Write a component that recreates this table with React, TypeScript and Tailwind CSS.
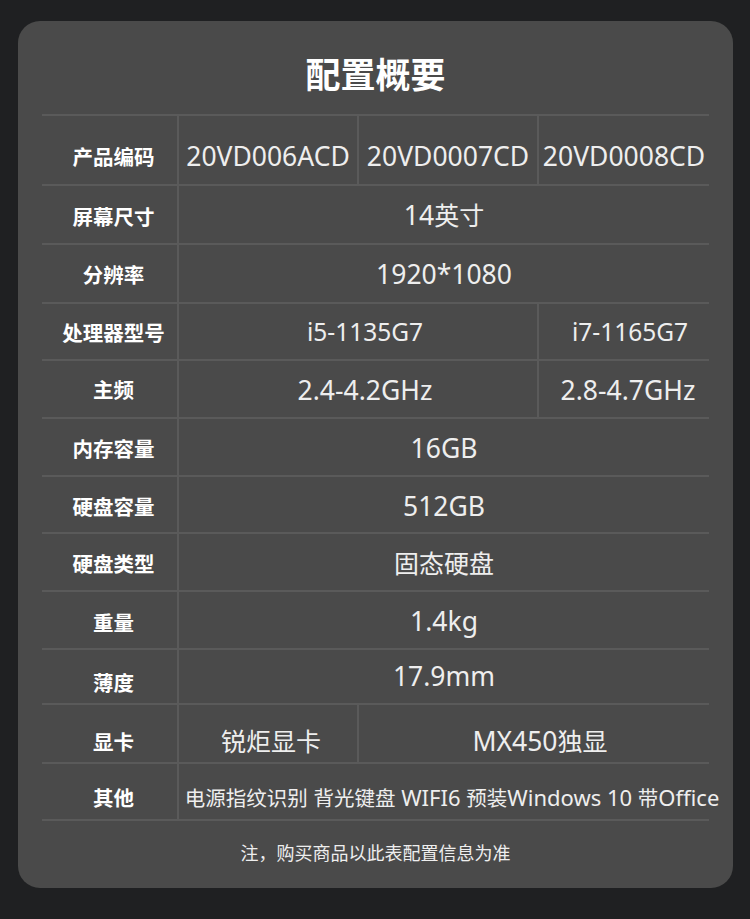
import React from "react";

type Cell = { text: string; span: number; cls?: string };
type Row = { label: string; h: string; lp: string; vp: string; lat?: string; cells: Cell[] };

const rows: Row[] = [
  {
    label: "产品编码",
    h: "h-[70px]",
    lp: "pt-[12px]",
    vp: "pt-[12px]",
    cells: [
      { text: "20VD006ACD", span: 1 },
      { text: "20VD0007CD", span: 1 },
      { text: "20VD0008CD", span: 1 },
    ],
  },
  { label: "屏幕尺寸", h: "h-[59px]", lp: "pt-[3px]", vp: "pt-[2px]", cells: [{ text: "14英寸", span: 3 }] },
  { label: "分辨率", h: "h-[59px]", lp: "pt-[1px]", vp: "pt-[2px]", cells: [{ text: "1920*1080", span: 3 }] },
  {
    label: "处理器型号",
    h: "h-[57px]",
    lp: "pt-[1px]",
    vp: "pt-[2px]",
    lat: "text-[24.5px]",
    cells: [
      { text: "i5-1135G7", span: 2, cls: "pl-[14px]" },
      { text: "i7-1165G7", span: 1, cls: "pl-[12px]" },
    ],
  },
  {
    label: "主频",
    h: "h-[58px]",
    lp: "pt-[1px]",
    vp: "pt-[2px]",
    cells: [
      { text: "2.4-4.2GHz", span: 2, cls: "pl-[14px]" },
      { text: "2.8-4.7GHz", span: 1, cls: "pl-[8px]" },
    ],
  },
  { label: "内存容量", h: "h-[58px]", lp: "pt-[2px]", vp: "pt-[2px]", cells: [{ text: "16GB", span: 3 }] },
  { label: "硬盘容量", h: "h-[57px]", lp: "pt-[4px]", vp: "pt-[3px]", cells: [{ text: "512GB", span: 3 }] },
  { label: "硬盘类型", h: "h-[58px]", lp: "pt-[2px]", vp: "pt-[2px]", cells: [{ text: "固态硬盘", span: 3 }] },
  { label: "重量", h: "h-[58px]", lp: "pt-[4px]", vp: "pt-[3px]", cells: [{ text: "1.4kg", span: 3 }] },
  { label: "薄度", h: "h-[55px]", lp: "pt-[12px]", vp: "pt-[0px]", cells: [{ text: "17.9mm", span: 3 }] },
  {
    label: "显卡",
    h: "h-[59px]",
    lp: "pt-[16px]",
    vp: "pt-[16px]",
    cells: [
      { text: "锐炬显卡", span: 1, cls: "pl-[6px]" },
      { text: "MX450独显", span: 2, cls: "pl-[12px]" },
    ],
  },
  {
    label: "其他",
    h: "h-[57px]",
    lp: "pt-[12px]",
    vp: "pt-[12px]",
    cells: [{ text: "电源指纹识别 背光键盘 WIFI6 预装Windows 10 带Office", span: 3, cls: "pl-[16px]" }],
  },
];

const spanClass: Record<number, string> = {
  1: "col-span-1",
  2: "col-span-2",
  3: "col-span-3",
};

function Mixed({ text, small, lat }: { text: string; small: boolean; lat?: string }) {
  const parts = text.split(/([\u4e00-\u9fff]+)/).filter((p) => p.length > 0);
  return (
    <span className="whitespace-pre">
      {parts.map((p, i) =>
        /[\u4e00-\u9fff]/.test(p) ? (
          <span key={i} className={small ? "text-[20.5px]" : "text-[25px]"}>
            {p}
          </span>
        ) : (
          <span key={i} className={small ? "text-[22px]" : lat ?? "text-[26.5px]"}>
            {p}
          </span>
        )
      )}
    </span>
  );
}

export default function App() {
  return (
    <div
      className="w-[750px] h-[919px] bg-[#1f2022] pt-[21px] pl-[18px]"
      style={{ fontFamily: '"Noto Sans", "Noto Sans CJK SC", sans-serif' }}
    >
      <div className="w-[715px] h-[867px] rounded-[22px] bg-[#4a4a4a] flex flex-col">
        <div className="h-[93px] flex items-center justify-center pt-[9px]">
          <h1
            className="text-[35px] font-bold text-white leading-none"
            style={{ fontFamily: '"Noto Sans CJK SC", sans-serif' }}
          >
            配置概要
          </h1>
        </div>
        <div className="ml-[24px] w-[667px] border-b-2 border-[#5a5a5a]">
          {rows.map((r) => {
            const small = r.label === "其他";
            return (
              <div
                key={r.label}
                className={`grid grid-cols-[135px_180px_180px_172px] border-t-2 border-[#5a5a5a] ${r.h}`}
              >
                <div
                  className={`flex items-center justify-center pl-[8px] text-[20.5px] font-bold text-white leading-none ${r.lp}`}
                  style={{ fontFamily: '"Noto Sans CJK SC", sans-serif' }}
                >
                  {r.label}
                </div>
                {r.cells.map((c, i) => (
                  <div
                    key={i}
                    className={`${spanClass[c.span]} border-l-2 border-[#5a5a5a] flex items-center justify-center whitespace-nowrap text-[#eeeeee] leading-none ${r.vp} ${
                      c.cls ?? ""
                    }`}
                  >
                    <Mixed text={c.text} small={small} lat={r.lat} />
                  </div>
                ))}
              </div>
            );
          })}
        </div>
        <div
          className="flex-1 flex items-center justify-center text-[18px] text-[#eeeeee] pb-[4px]"
          style={{ fontFamily: '"Noto Sans CJK SC", sans-serif' }}
        >
          注，购买商品以此表配置信息为准
        </div>
      </div>
    </div>
  );
}
